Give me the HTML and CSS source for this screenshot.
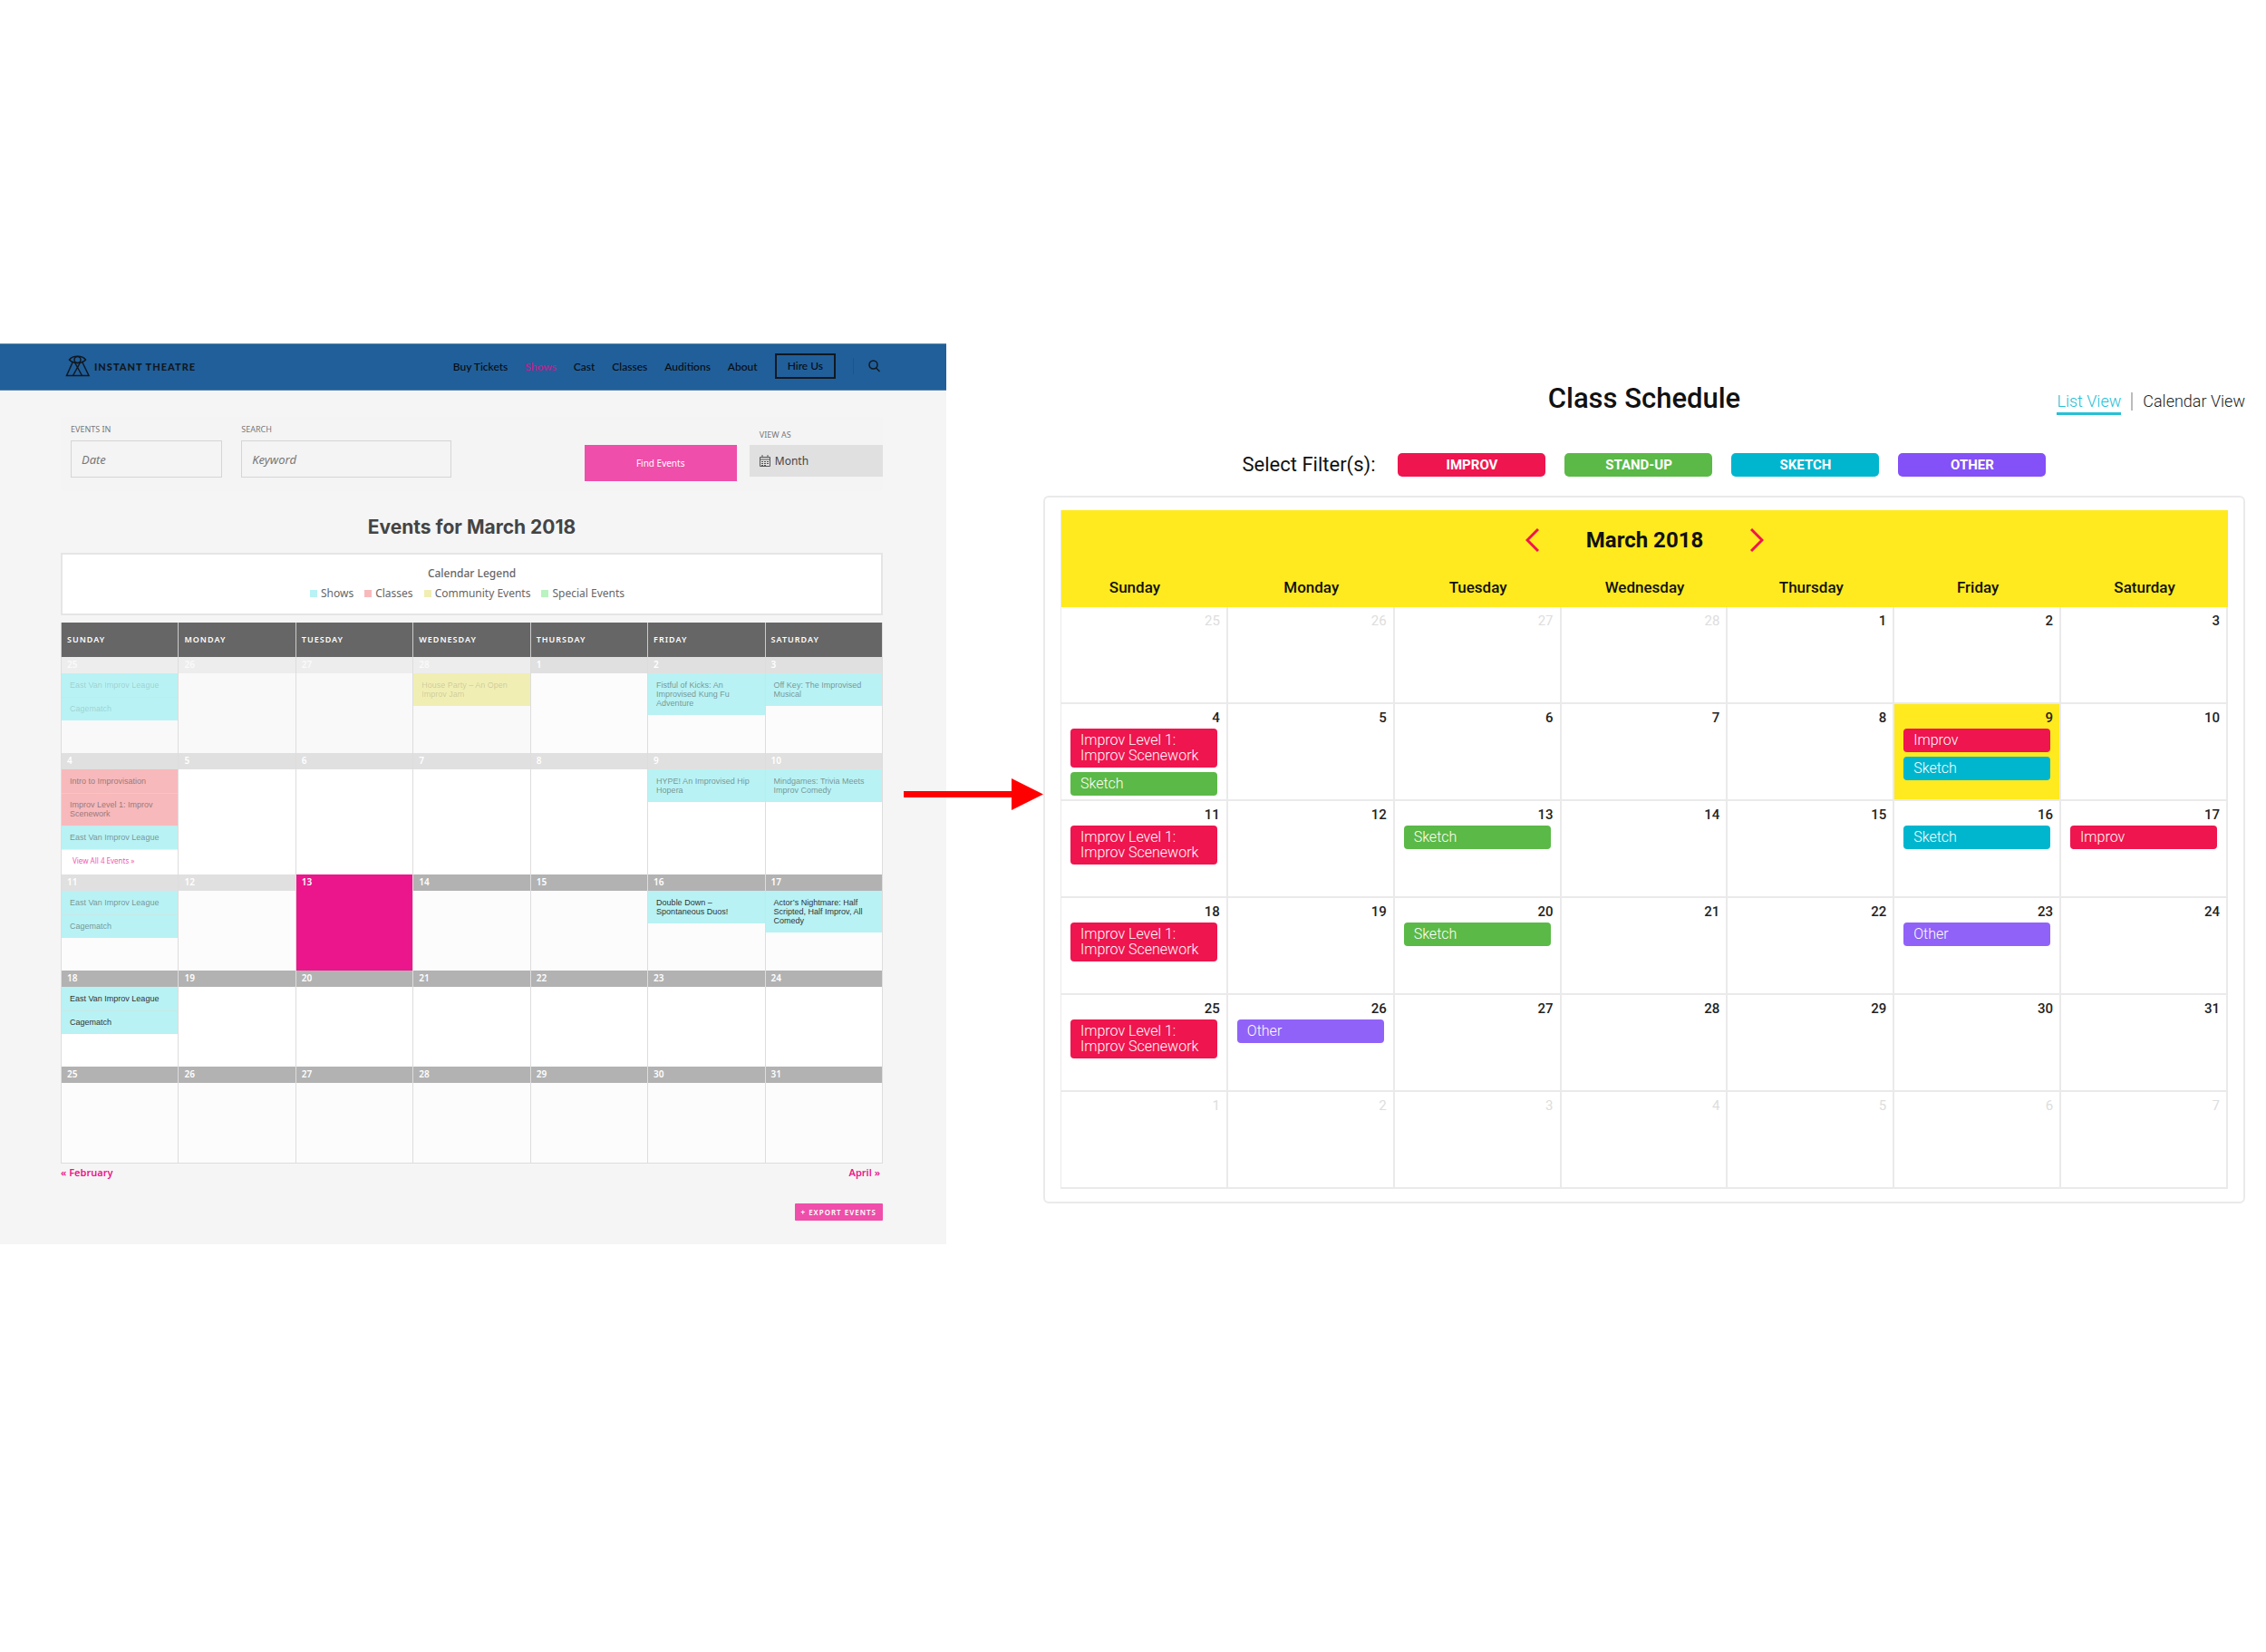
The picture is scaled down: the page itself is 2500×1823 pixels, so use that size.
FILE: index.html
```html
<!DOCTYPE html>
<html lang="en">

<head>
    <meta charset="UTF-8">
    <meta name="viewport" content="width=device-width, initial-scale=1.0">
    <title>Class Schedule</title>
    <link rel="stylesheet" href="styles.css">
</head>

<body>
    <main class="compare">
        <!-- Current events page -->
        <section class="site">
            <header class="site-header">
                <a class="logo" href="#">
                    <svg width="28" height="24" viewBox="0 0 28 24" fill="none" stroke="#111820" stroke-width="1.5">
                        <path d="M4.500 5C8 0 19 0 22.500 5C19 9.500 8 9.500 4.500 5Z" />
                        <circle cx="13.500" cy="5" r="3.500" />
                        <path d="M8 8L1.500 22.500H26L19 8" />
                        <path d="M10.500 8L18.500 22.500M16.500 8L8.500 22.500" />
                    </svg>
                    <span>INSTANT THEATRE</span>
                </a>
                <nav class="site-nav">
                    <a href="#">Buy Tickets</a>
                    <a class="active" href="#">Shows</a>
                    <a href="#">Cast</a>
                    <a href="#">Classes</a>
                    <a href="#">Auditions</a>
                    <a href="#">About</a>
                    <a class="hire" href="#">Hire Us</a>
                    <button class="search-btn" aria-label="Search">
                        <svg width="13" height="14" viewBox="0 0 13 14" fill="none" stroke="#111820" stroke-width="1.5">
                            <circle cx="5.500" cy="5.500" r="4.500" />
                            <path d="M8.500 9L12.500 13" />
                        </svg>
                    </button>
                </nav>
            </header>

            <div class="site-body">
                <form class="filter-bar">
                    <div class="field field-date">
                        <label for="date">EVENTS IN</label>
                        <input type="text" id="date" placeholder="Date">
                    </div>
                    <div class="field field-keyword">
                        <label for="keyword">SEARCH</label>
                        <input type="text" id="keyword" placeholder="Keyword">
                    </div>
                    <button class="find-btn" type="button">Find Events</button>
                    <div class="field field-view">
                        <label for="view">VIEW AS</label>
                        <div class="select-wrap">
                            <svg class="select-icon" width="12" height="13" viewBox="0 0 12 13" fill="none" stroke="#555">
                                <path d="M.5 2.500H11.500V12.500H.5ZM.5 5H11.500M3 0V3M9 0V3" />
                                <path d="M2 7.500H10M2 9.500H10M2 11.500H8" stroke-dasharray="2 1" />
                            </svg>
                            <select id="view">
                                <option>Month</option>
                            </select>
                        </div>
                    </div>
                </form>

                <h2 class="events-title">Events for March 2018</h2>

                <div class="legend">
                    <div class="legend-title">Calendar Legend</div>
                    <ul class="legend-list">
                        <li class="legend-shows">Shows</li>
                        <li class="legend-classes">Classes</li>
                        <li class="legend-community">Community Events</li>
                        <li class="legend-special">Special Events</li>
                    </ul>
                </div>

                <table class="events">
                    <thead>
                        <tr>
                            <th>SUNDAY</th>
                            <th>MONDAY</th>
                            <th>TUESDAY</th>
                            <th>WEDNESDAY</th>
                            <th>THURSDAY</th>
                            <th>FRIDAY</th>
                            <th>SATURDAY</th>
                        </tr>
                    </thead>
                    <tbody>
                        <tr>
                            <td class="other-month">
                                <div class="day">25</div>
                                <a class="show" href="#">East Van Improv League</a>
                                <a class="show" href="#">Cagematch</a>
                            </td>
                            <td class="other-month"><div class="day">26</div></td>
                            <td class="other-month"><div class="day">27</div></td>
                            <td class="other-month">
                                <div class="day">28</div>
                                <a class="community" href="#">House Party – An Open Improv Jam</a>
                            </td>
                            <td class="past"><div class="day">1</div></td>
                            <td class="past">
                                <div class="day">2</div>
                                <a class="show" href="#">Fistful of Kicks: An Improvised Kung Fu Adventure</a>
                            </td>
                            <td class="past">
                                <div class="day">3</div>
                                <a class="show" href="#">Off Key: The Improvised Musical</a>
                            </td>
                        </tr>
                        <tr>
                            <td class="past">
                                <div class="day">4</div>
                                <a class="class" href="#">Intro to Improvisation</a>
                                <a class="class" href="#">Improv Level 1: Improv Scenework</a>
                                <a class="show" href="#">East Van Improv League</a>
                                <a class="view-all" href="#">View All 4 Events »</a>
                            </td>
                            <td class="past"><div class="day">5</div></td>
                            <td class="past"><div class="day">6</div></td>
                            <td class="past"><div class="day">7</div></td>
                            <td class="past"><div class="day">8</div></td>
                            <td class="past">
                                <div class="day">9</div>
                                <a class="show" href="#">HYPE! An Improvised Hip Hopera</a>
                            </td>
                            <td class="past">
                                <div class="day">10</div>
                                <a class="show" href="#">Mindgames: Trivia Meets Improv Comedy</a>
                            </td>
                        </tr>
                        <tr>
                            <td class="past">
                                <div class="day">11</div>
                                <a class="show" href="#">East Van Improv League</a>
                                <a class="show" href="#">Cagematch</a>
                            </td>
                            <td class="past"><div class="day">12</div></td>
                            <td class="today"><div class="day">13</div></td>
                            <td><div class="day">14</div></td>
                            <td><div class="day">15</div></td>
                            <td>
                                <div class="day">16</div>
                                <a class="show" href="#">Double Down – Spontaneous Duos!</a>
                            </td>
                            <td>
                                <div class="day">17</div>
                                <a class="show" href="#">Actor’s Nightmare: Half Scripted, Half Improv, All Comedy</a>
                            </td>
                        </tr>
                        <tr>
                            <td>
                                <div class="day">18</div>
                                <a class="show" href="#">East Van Improv League</a>
                                <a class="show" href="#">Cagematch</a>
                            </td>
                            <td><div class="day">19</div></td>
                            <td><div class="day">20</div></td>
                            <td><div class="day">21</div></td>
                            <td><div class="day">22</div></td>
                            <td><div class="day">23</div></td>
                            <td><div class="day">24</div></td>
                        </tr>
                        <tr>
                            <td><div class="day">25</div></td>
                            <td><div class="day">26</div></td>
                            <td><div class="day">27</div></td>
                            <td><div class="day">28</div></td>
                            <td><div class="day">29</div></td>
                            <td><div class="day">30</div></td>
                            <td><div class="day">31</div></td>
                        </tr>
                    </tbody>
                </table>

                <div class="month-links">
                    <a href="#">« February</a>
                    <a href="#">April »</a>
                </div>
                <a class="export-btn" href="#">+ EXPORT EVENTS</a>
            </div>
        </section>

        <svg class="arrow" viewBox="0 0 154 36" fill="#ff0000">
            <rect x="0" y="15" width="122" height="7" />
            <path d="M119 1L154 18.500L119 36Z" />
        </svg>

        <!-- New schedule -->
        <section class="schedule">
            <div class="schedule-top">
                <h1>Class Schedule</h1>
                <div class="views">
                    <a class="active" href="#">List View</a>
                    <a href="#">Calendar View</a>
                </div>
            </div>

            <div class="filters">
                <span class="filters-label">Select Filter(s):</span>
                <button class="improv">IMPROV</button>
                <button class="standup">STAND-UP</button>
                <button class="sketch">SKETCH</button>
                <button class="other">OTHER</button>
            </div>

            <div class="card">
                <table class="month">
                    <thead>
                        <tr>
                            <th class="month-head" colspan="7">
                                <div class="month-nav">
                                    <button aria-label="Previous month">
                                        <svg width="15" height="26" viewBox="0 0 15 26" fill="none" stroke="#f0144f" stroke-width="3">
                                            <path d="M14 1L2 13L14 25" />
                                        </svg>
                                    </button>
                                    <span>March 2018</span>
                                    <button aria-label="Next month">
                                        <svg width="15" height="26" viewBox="0 0 15 26" fill="none" stroke="#f0144f" stroke-width="3">
                                            <path d="M1 1L13 13L1 25" />
                                        </svg>
                                    </button>
                                </div>
                            </th>
                        </tr>
                        <tr class="weekdays">
                            <th>Sunday</th>
                            <th>Monday</th>
                            <th>Tuesday</th>
                            <th>Wednesday</th>
                            <th>Thursday</th>
                            <th>Friday</th>
                            <th>Saturday</th>
                        </tr>
                    </thead>
                    <tbody>
                        <tr>
                            <td class="muted"><div class="num">25</div></td>
                            <td class="muted"><div class="num">26</div></td>
                            <td class="muted"><div class="num">27</div></td>
                            <td class="muted"><div class="num">28</div></td>
                            <td><div class="num">1</div></td>
                            <td><div class="num">2</div></td>
                            <td><div class="num">3</div></td>
                        </tr>
                        <tr>
                            <td>
                                <div class="num">4</div>
                                <a class="pill improv" href="#">Improv Level 1: Improv Scenework</a>
                                <a class="pill standup" href="#">Sketch</a>
                            </td>
                            <td><div class="num">5</div></td>
                            <td><div class="num">6</div></td>
                            <td><div class="num">7</div></td>
                            <td><div class="num">8</div></td>
                            <td class="current">
                                <div class="num">9</div>
                                <a class="pill improv" href="#">Improv</a>
                                <a class="pill sketch" href="#">Sketch</a>
                            </td>
                            <td><div class="num">10</div></td>
                        </tr>
                        <tr>
                            <td>
                                <div class="num">11</div>
                                <a class="pill improv" href="#">Improv Level 1: Improv Scenework</a>
                            </td>
                            <td><div class="num">12</div></td>
                            <td>
                                <div class="num">13</div>
                                <a class="pill standup" href="#">Sketch</a>
                            </td>
                            <td><div class="num">14</div></td>
                            <td><div class="num">15</div></td>
                            <td>
                                <div class="num">16</div>
                                <a class="pill sketch" href="#">Sketch</a>
                            </td>
                            <td>
                                <div class="num">17</div>
                                <a class="pill improv" href="#">Improv</a>
                            </td>
                        </tr>
                        <tr>
                            <td>
                                <div class="num">18</div>
                                <a class="pill improv" href="#">Improv Level 1: Improv Scenework</a>
                            </td>
                            <td><div class="num">19</div></td>
                            <td>
                                <div class="num">20</div>
                                <a class="pill standup" href="#">Sketch</a>
                            </td>
                            <td><div class="num">21</div></td>
                            <td><div class="num">22</div></td>
                            <td>
                                <div class="num">23</div>
                                <a class="pill other" href="#">Other</a>
                            </td>
                            <td><div class="num">24</div></td>
                        </tr>
                        <tr>
                            <td>
                                <div class="num">25</div>
                                <a class="pill improv" href="#">Improv Level 1: Improv Scenework</a>
                            </td>
                            <td>
                                <div class="num">26</div>
                                <a class="pill other" href="#">Other</a>
                            </td>
                            <td><div class="num">27</div></td>
                            <td><div class="num">28</div></td>
                            <td><div class="num">29</div></td>
                            <td><div class="num">30</div></td>
                            <td><div class="num">31</div></td>
                        </tr>
                        <tr>
                            <td class="muted"><div class="num">1</div></td>
                            <td class="muted"><div class="num">2</div></td>
                            <td class="muted"><div class="num">3</div></td>
                            <td class="muted"><div class="num">4</div></td>
                            <td class="muted"><div class="num">5</div></td>
                            <td class="muted"><div class="num">6</div></td>
                            <td class="muted"><div class="num">7</div></td>
                        </tr>
                    </tbody>
                </table>
            </div>
        </section>
    </main>
</body>

</html>
```
FILE: styles.css
```css
* {
    box-sizing: border-box;
}

body {
    margin: 0;
    background: #fff;
    font-family: 'Noto Sans', sans-serif;
}

a {
    text-decoration: none;
}

button {
    border: none;
    padding: 0;
    cursor: pointer;
}

svg {
    display: block;
}

table {
    width: 100%;
    table-layout: fixed;
    border-spacing: 0;
}

.compare {
    display: grid;
    grid-template-columns: 1044fr 107fr 1326fr;
    align-items: start;
    padding: 379px 23px 0 0;
}

/* current events page */
.site {
    background: #f5f5f5;
}

.site-header {
    display: flex;
    align-items: center;
    justify-content: space-between;
    height: 52px;
    padding: 0 73px 2px 72px;
    background: #215f9a;
    border-top: 1px solid #5582ac;
    border-bottom: 1px solid #5582ac;
    font-family: Lato, sans-serif;
}

.logo {
    display: flex;
    align-items: center;
    gap: 4px;
    color: #111820;
    font-size: 11px;
    font-weight: 900;
    letter-spacing: 1px;
}

.site-nav {
    display: flex;
    align-items: center;
    gap: 19px;
    font-size: 12px;
    font-weight: 500;
}

.site-nav a {
    color: #080c10;
}

.site-nav .active {
    color: #c2208f;
}

.site-nav .hire {
    padding: 3px 12px;
    border: 2px solid #111820;
    line-height: 18px;
}

.search-btn {
    height: 18px;
    padding-left: 16px;
    background: none;
    border-left: 1px solid #1d5488;
}

.site-body {
    padding: 29px 70px 26px 67px;
}

.filter-bar {
    display: flex;
    align-items: flex-start;
    height: 82px;
    padding-left: 11px;
    background: #f4f4f4;
}

.field {
    padding-top: 7px;
}

.field label {
    display: block;
    margin-bottom: 5px;
    color: #777;
    font-size: 9px;
    line-height: 14px;
}

.field input {
    width: 100%;
    height: 41px;
    padding: 0 11px;
    border: 1px solid #d5d5d5;
    background: #f4f4f4;
    font-family: inherit;
    font-size: 13px;
}

.field input::placeholder {
    color: #777;
    font-style: italic;
}

.field-date {
    flex: 167;
    margin-right: 21px;
}

.field-keyword {
    flex: 231;
    margin-right: 147px;
}

.find-btn {
    flex: 168;
    height: 40px;
    margin: 31px 14px 0 0;
    background: #ef4eaa;
    color: #fff;
    font-family: inherit;
    font-size: 10px;
}

.field-view {
    flex: 147;
    padding-top: 13px;
}

.field-view label {
    padding-left: 11px;
    margin-bottom: 4px;
}

.select-wrap {
    position: relative;
}

.select-icon {
    position: absolute;
    left: 11px;
    top: 11px;
}

.field-view select {
    appearance: none;
    width: 100%;
    height: 35px;
    padding: 0 28px;
    border: none;
    border-radius: 0;
    background: #e0e0e0;
    color: #444;
    font-family: inherit;
    font-size: 12px;
}

.events-title {
    margin: 25px 0 13px;
    color: #444;
    font-family: Inter, sans-serif;
    font-size: 21px;
    line-height: 30px;
    text-align: center;
}

.legend {
    padding: 10px 0 11px;
    border: 2px solid #e5e5e5;
    background: #fff;
    color: #666;
    font-size: 12px;
    line-height: 22px;
    text-align: center;
}

.legend-title {
    font-weight: 500;
}

.legend-list {
    display: flex;
    justify-content: center;
    gap: 12px;
    margin: 0;
    padding: 0 10px 0 0;
    list-style: none;
}

.legend-list li {
    display: flex;
    align-items: center;
    gap: 4px;
}

.legend-list li::before {
    content: '';
    width: 8px;
    height: 8px;
}

.legend-shows::before {
    background: #b8f2f4;
}

.legend-classes::before {
    background: #f7b9bb;
}

.legend-community::before {
    background: #f0eeb3;
}

.legend-special::before {
    background: #b9f3c0;
}

.events {
    margin-top: 8px;
    border-right: 1px solid #ddd;
    border-bottom: 1px solid #ddd;
}

.events th {
    height: 38px;
    padding: 0 7px 2px 6px;
    border-left: 1px solid #ccc;
    background: #666;
    color: #fff;
    font-size: 9px;
    font-weight: 600;
    letter-spacing: 1px;
    text-align: left;
}

.events td {
    height: 106px;
    padding: 0;
    border-left: 1px solid #ddd;
    background: #fff;
    vertical-align: top;
}

.events tr:nth-child(odd) td {
    background: #fcfcfc;
}

.events .day {
    height: 18px;
    padding: 0 6px;
    background: #b2b2b2;
    color: #fff;
    font-size: 10px;
    font-weight: 600;
    line-height: 17px;
}

.events .past .day {
    background: #e0e0e0;
}

.events .other-month .day {
    background: #ededed;
    color: #fafafa;
}

.events tr td.other-month {
    background: #f9f9f9;
}

.events tr td.today,
.events .today .day {
    background: #eb168b;
}

.events td a {
    display: block;
    padding: 8px 9px;
    color: #333;
    font-family: 'Liberation Sans', sans-serif;
    font-size: 9px;
    line-height: 10px;
}

.events td a.show {
    background: #b8f2f4;
}

.events td a.class {
    background: #f7b9bb;
}

.events td a.community {
    background: #f0eeb3;
}

.events td a + a {
    box-shadow: inset 0 1px rgba(220, 220, 220, 0.5);
}

.events .past a {
    color: rgba(51, 51, 51, 0.5);
}

.events .other-month a {
    color: rgba(51, 51, 51, 0.2);
}

.events td a.view-all {
    padding: 8px 12px 10px;
    color: #f05bb0;
    font-family: inherit;
    font-size: 8px;
}

.month-links {
    display: flex;
    justify-content: space-between;
    padding: 2px 3px 0 0;
    font-size: 11px;
    font-weight: 600;
    line-height: 16px;
}

.month-links a {
    color: #eb168b;
}

.export-btn {
    display: block;
    width: fit-content;
    margin: 26px 0 0 auto;
    padding: 0 7px;
    border-radius: 1px;
    background: #ef4eaa;
    color: #fff;
    font-size: 8px;
    font-weight: 600;
    line-height: 19px;
    letter-spacing: 1px;
}

/* the arrow starts over the events page */
.arrow {
    position: relative;
    align-self: center;
    width: calc(100% + 47px);
    margin-left: -47px;
}

/* new schedule */
.schedule {
    padding-top: 42px;
    color: #111;
    font-family: Roboto, sans-serif;
}

.schedule-top {
    display: grid;
    grid-template-columns: 1fr auto 1fr;
    align-items: center;
}

.schedule-top h1 {
    grid-column: 2;
    margin: 0;
    font-size: 31px;
    font-weight: 500;
    line-height: 38px;
}

.views {
    display: flex;
    justify-content: flex-end;
    align-items: flex-start;
    padding-top: 8px;
    font-size: 18px;
    font-weight: 300;
    line-height: 24px;
}

.views a {
    color: #222;
}

.views .active {
    margin-right: 11px;
    border-bottom: 3px solid #26c0d6;
    color: #26c0d6;
}

.views .active + a {
    margin-top: 2px;
    padding-left: 11px;
    border-left: 2px solid #bbb;
    line-height: 20px;
}

.filters {
    display: flex;
    justify-content: center;
    gap: 21px;
    margin: 41px 0 21px;
}

.filters-label {
    margin-right: 4px;
    font-size: 22px;
    line-height: 26px;
}

.filters button {
    flex: 0 1 163px;
    height: 26px;
    border-radius: 5px;
    color: #fff;
    font-family: inherit;
    font-size: 15px;
    font-weight: bold;
}

.improv {
    background: #ef154f;
}

.standup {
    background: #5bb947;
}

.sketch {
    background: #00b6ce;
}

.other {
    background: #8450f7;
}

.card {
    padding: 14px 17px;
    border: 2px solid #eaeaea;
    border-radius: 6px;
}

.month {
    border-left: 1px solid #eaeaea;
}

.month th {
    height: 41px;
    padding: 0 0 3px;
    background: #ffea1f;
    font-size: 17px;
    font-weight: 500;
}

.month .month-head {
    height: 66px;
    padding: 0;
}

.weekdays th:first-child {
    padding-right: 22px;
}

.month-nav {
    display: flex;
    align-items: center;
    justify-content: center;
    gap: 52px;
    font-size: 24px;
    font-weight: bold;
}

.month-nav button {
    background: none;
}

.month td {
    height: 107px;
    padding: 6px 10px 0;
    border-right: 2px solid #eaeaea;
    border-bottom: 2px solid #eaeaea;
    vertical-align: top;
}

.month .num {
    margin: 0 -3px 3px 0;
    color: #222;
    font-size: 15px;
    font-weight: 500;
    line-height: 18px;
    text-align: right;
}

.month .muted .num {
    color: #ddd;
    font-weight: normal;
}

.month .current {
    background: #ffea1f;
}

.pill {
    display: block;
    margin-bottom: 5px;
    padding: 4px 11px 5px;
    border-radius: 4px;
    color: #fff;
    font-size: 16px;
    font-weight: 300;
    line-height: 17px;
}

.pill:last-child {
    margin-bottom: 0;
}

.pill.other {
    background: #9162f8;
}
```
